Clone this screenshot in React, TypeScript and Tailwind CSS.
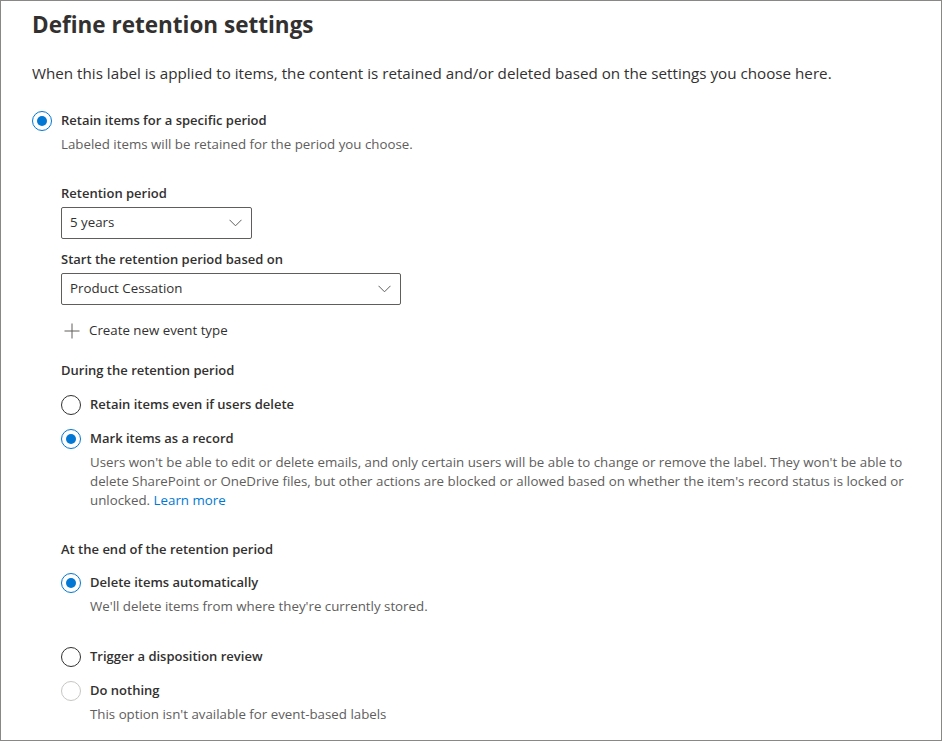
import React from "react";

const font = { fontFamily: '"Open Sans", "Noto Sans", sans-serif' };

function Radio({ state }: { state: "on" | "off" | "disabled" }) {
  if (state === "on") {
    return (
      <span className="flex h-5 w-5 shrink-0 items-center justify-center rounded-full border border-[#0078d4] bg-white">
        <span className="h-[10px] w-[10px] rounded-full bg-[#0078d4]" />
      </span>
    );
  }
  return (
    <span
      className={
        "h-5 w-5 shrink-0 rounded-full border bg-white " +
        (state === "off" ? "border-[#323130]" : "border-[#c8c6c4]")
      }
    />
  );
}

function Choice({
  state,
  label,
  children,
}: {
  state: "on" | "off" | "disabled";
  label: string;
  children?: React.ReactNode;
}) {
  return (
    <div>
      <div className="flex h-5 items-center gap-[9px]">
        <Radio state={state} />
        <span className="text-[13px] font-semibold text-[#323130]">{label}</span>
      </div>
      {children && (
        <div className="mt-[4px] pl-[29px] text-[13.3px] leading-[19px] text-[#605e5c]">{children}</div>
      )}
    </div>
  );
}

function Chevron() {
  return (
    <svg width="13" height="8" viewBox="0 0 13 8" fill="none">
      <path d="M0.5 0.8 L6.5 6.8 L12.5 0.8" stroke="#605e5c" strokeWidth="1" />
    </svg>
  );
}

function Dropdown({ value, width }: { value: string; width: string }) {
  return (
    <div
      className={
        "flex h-8 items-center justify-between rounded-[2px] border border-[#605e5c] bg-white pl-[8px] pr-[9px] " +
        width
      }
    >
      <span className="text-[13.3px] text-[#323130]">{value}</span>
      <Chevron />
    </div>
  );
}

export default function App() {
  return (
    <div style={font} className="h-[741px] w-[942px] overflow-hidden border border-[#8a8886] bg-white">
      <div className="pl-[31px] pt-[8px]">
        <h1 className="text-[22.5px] font-bold leading-[32px] text-[#323130]">Define retention settings</h1>
        <p className="mt-[22px] text-[15.2px] leading-[20px] text-[#323130]">
          When this label is applied to items, the content is retained and/or deleted based on the settings you choose
          here.
        </p>

        <div className="mt-[28px]">
          <Choice state="on" label="Retain items for a specific period">
            Labeled items will be retained for the period you choose.
          </Choice>
        </div>

        <div className="pl-[29px]">
          <div className="mt-[29px] text-[13px] font-semibold leading-[20px] text-[#323130]">Retention period</div>
          <div className="mt-[4px]">
            <Dropdown value="5 years" width="w-[191px]" />
          </div>
          <div className="mt-[10px] text-[13px] font-semibold leading-[20px] text-[#323130]">
            Start the retention period based on
          </div>
          <div className="mt-[4px]">
            <Dropdown value="Product Cessation" width="w-[340px]" />
          </div>
          <div className="mt-[14px] flex h-[24px] items-center gap-[9px] pl-[3px]">
            <svg width="16" height="16" viewBox="0 0 16 16" fill="none">
              <path d="M8 0.5 V15.5 M0.5 8 H15.5" stroke="#605e5c" strokeWidth="1" />
            </svg>
            <span className="text-[13.3px] text-[#323130]">Create new event type</span>
          </div>

          <div className="mt-[17px] text-[13px] font-semibold leading-[20px] text-[#323130]">
            During the retention period
          </div>
          <div className="mt-[15px] flex flex-col gap-[14px]">
            <Choice state="off" label="Retain items even if users delete" />
            <Choice state="on" label="Mark items as a record">
              <p className="pr-[30px]">
                Users won't be able to edit or delete emails, and only certain users will be able to change or remove
                the label. They won't be able to delete SharePoint or OneDrive files, but other actions are blocked or
                allowed based on whether the item's record status is locked or unlocked.{" "}
                <a className="text-[#0078d4]">Learn more</a>
              </p>
            </Choice>
          </div>

          <div className="mt-[29px] text-[13px] font-semibold leading-[20px] text-[#323130]">
            At the end of the retention period
          </div>
          <div className="mt-[14px]">
            <Choice state="on" label="Delete items automatically">
              We'll delete items from where they're currently stored.
            </Choice>
          </div>
          <div className="mt-[31px] flex flex-col gap-[14px]">
            <Choice state="off" label="Trigger a disposition review" />
            <Choice state="disabled" label="Do nothing">
              This option isn't available for event-based labels
            </Choice>
          </div>
        </div>
      </div>
    </div>
  );
}
